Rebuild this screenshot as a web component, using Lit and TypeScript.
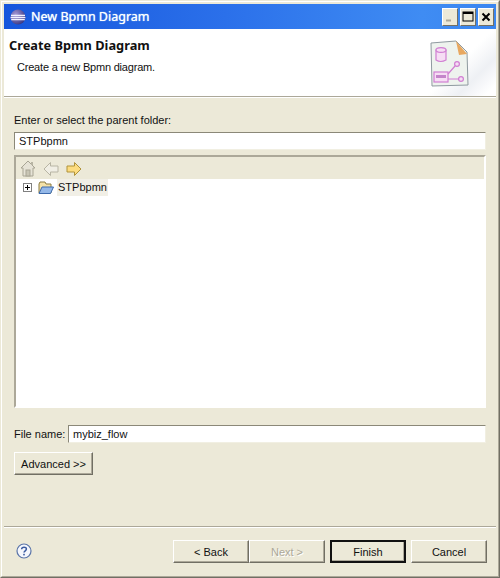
import { LitElement, html, css, svg } from "lit";
import { customElement } from "lit/decorators.js";

@customElement("app-root")
export class AppRoot extends LitElement {
  static styles = css`
    :host {
      display: block;
      width: 500px;
      height: 578px;
      font-family: "Liberation Sans", "Noto Sans", sans-serif;
      font-size: 11px;
      color: #111;
      overflow: hidden;
    }
    * { box-sizing: border-box; }
    .frame {
      width: 500px;
      height: 578px;
      border: 1px solid;
      border-color: #ece9d8 #716f64 #716f64 #ece9d8;
    }
    .window {
      height: 100%;
      background: #ece9d8;
      border: 1px solid;
      border-color: #fff #aca899 #aca899 #fff;
      padding: 2px;
      display: flex;
      flex-direction: column;
    }
    .title {
      height: 25px;
      flex: none;
      display: flex;
      align-items: center;
      padding: 0 2px 0 6px;
      gap: 5px;
      background: linear-gradient(90deg, #1656dc 0%, #2b70ea 45%, #3f8cf3 85%, #3a86f0 100%);
      color: #fff;
      font-family: "Noto Sans", sans-serif;
      font-size: 12.5px;
    }
    .title-text { flex: 1; text-shadow: 0 0 1px #dff; }
    .wbtns { display: flex; gap: 2px; }
    .wbtn {
      width: 16px;
      height: 18px;
      background: #ece9d8;
      border: 1px solid;
      border-color: #fff #716f64 #716f64 #fff;
      display: flex;
      align-items: center;
      justify-content: center;
    }
    .banner {
      height: 67px;
      flex: none;
      background: #fff;
      display: flex;
      overflow: hidden;
    }
    .banner-text { flex: 1; padding: 9px 0 0 5px; }
    .banner-title { font-family: "Noto Sans", sans-serif; font-weight: 700; font-size: 12.8px; line-height: 15px; color: #111; }
    .banner-desc { padding: 7px 0 0 8px; line-height: 14px; letter-spacing: -0.2px; }
    .banner-art { width: 72px; flex: none; padding: 11px 0 0 6px; background: linear-gradient(135deg, #fff 50%, #eef0f4 72%, #fff 92%); }
    .rule { height: 2px; flex: none; border-top: 1px solid #aca899; border-bottom: 1px solid #fff; }
    .main { flex: 1; display: flex; flex-direction: column; padding: 15px 10px 0 10px; }
    .label { line-height: 14px; white-space: nowrap; }
    .input {
      height: 18px;
      background: #fff;
      border: 1px solid;
      border-color: #8b8878 #f1efe2 #f1efe2 #8b8878;
      padding: 0 4px;
      line-height: 17px;
      flex: none;
    }
    .folder-input { margin-top: 5px; }
    .tree {
      margin-top: 5px;
      height: 253px;
      flex: none;
      border: 2px solid;
      border-color: #aca899 #fff #fff #aca899;
      display: flex;
      flex-direction: column;
    }
    .toolbar {
      height: 22px;
      flex: none;
      display: flex;
      align-items: center;
      gap: 7px;
      padding: 1px 0 0 4px;
      background: #ece9d8;
    }
    .tree-body { flex: 1; background: #fff; padding: 0 0 0 7px; }
    .row { display: flex; align-items: center; height: 17px; }
    .plus { width: 9px; height: 9px; border: 1px solid #808080; display: flex; align-items: center; justify-content: center; background: #fff; }
    .folder { margin: 0 3px 0 6px; display: block; }
    .sel { background: #f1efe6; height: 17px; line-height: 17px; padding: 0 1px; }
    .file-row { margin-top: 17px; display: flex; align-items: center; gap: 5px; }
    .file-row .label { width: 49px; flex: none; }
    .file-row .input { flex: 1; }
    .btn {
      height: 23px;
      background: #ece9d8;
      border: 1px solid;
      border-color: #fff #716f64 #716f64 #fff;
      box-shadow: inset -1px -1px 0 #aca899;
      display: flex;
      align-items: center;
      justify-content: center;
      flex: none;
      width: 76px;
    }
    .adv { width: 79px; margin-top: 9px; }
    .footer-rule { margin-top: auto; }
    .footer { height: 46px; flex: none; display: flex; align-items: flex-start; padding: 12px 9px 0 12px; }
    .help { flex: none; margin-top: 3px; display: block; }
    .actions { margin-left: auto; display: flex; }
    .actions .gap { margin-left: 5px; }
    .disabled { color: #aca899; text-shadow: 1px 1px 0 #fff; }
    .default { border: 2px solid #111; box-shadow: inset -1px -1px 0 #aca899; }
  `;

  private eclipse() {
    return html`<svg width="16" height="16" viewBox="0 0 16 16">
      <defs><radialGradient id="ec" cx="0.35" cy="0.35" r="0.8"><stop offset="0" stop-color="#a89bd8"/><stop offset="1" stop-color="#2a2a78"/></radialGradient></defs>
      <circle cx="8" cy="8" r="7.5" fill="url(#ec)"/>
      <path d="M1 6.5h14M0.6 8.6h14.8M1.2 10.6h13.6" stroke="#f0f0ff" stroke-width="1.3"/>
    </svg>`;
  }

  private pageArt() {
    return svg`<svg width="40" height="48" viewBox="0 0 40 48">
      <path d="M1 3 L26 1 L37 12 L38 45 L2 46 Z" fill="#eef3ee" stroke="#8f9aa0"/>
      <path d="M26 1 L37 14 L29 15 Z" fill="#e8a860"/>
      <g fill="#f6ddf4" stroke="#d07fd2" stroke-width="1.2">
        <path d="M6 10 v10 q4.5 3 10 0 v-10 Z"/>
        <ellipse cx="11" cy="10" rx="5" ry="2.4"/>
        <rect x="4" y="32" width="14" height="10"/>
        <circle cx="27" cy="24" r="2.4"/>
        <circle cx="31" cy="39" r="2.4"/>
      </g>
      <path d="M18 34 L25 26 M18 39 L29 39" stroke="#d07fd2" stroke-width="1.2" fill="none"/>
      <path d="M6 35h10v3h-10z" fill="#c484ca"/>
    </svg>`;
  }

  private toolIcon(kind: string) {
    if (kind === "home") {
      return svg`<svg width="16" height="17" viewBox="0 0 16 17"><path d="M8 1 L15 8 H13 V16 H3 V8 H1 Z" fill="#e6e3d6" stroke="#a8a594"/><rect x="6" y="10" width="4" height="6" fill="#c8c5b4" stroke="#a8a594"/><rect x="11" y="2" width="2" height="3" fill="#b8b5a4"/></svg>`;
    }
    if (kind === "back") {
      return svg`<svg width="16" height="14" viewBox="0 0 16 14"><path d="M1 7 L7.5 0.5 V4 H15 V10 H7.5 V13.5 Z" fill="#f0eee4" stroke="#b8b5a4"/></svg>`;
    }
    return svg`<svg width="16" height="14" viewBox="0 0 16 14"><path d="M15 7 L8.5 0.5 V4 H1 V10 H8.5 V13.5 Z" fill="#fcdc80" stroke="#b0933a"/></svg>`;
  }

  render() {
    return html`<div class="frame"><div class="window">
      <div class="title">
        ${this.eclipse()}
        <div class="title-text">New Bpmn Diagram</div>
        <div class="wbtns">
          <div class="wbtn"><svg width="10" height="10" viewBox="0 0 10 10"><path d="M1 8.5h5" stroke="#aca899" stroke-width="2"/></svg></div>
          <div class="wbtn"><svg width="12" height="11" viewBox="0 0 12 11"><rect x="1" y="1" width="10" height="9" fill="none" stroke="#000"/><path d="M1 2h10" stroke="#000" stroke-width="2"/></svg></div>
          <div class="wbtn"><svg width="10" height="10" viewBox="0 0 10 10"><path d="M1.5 1.5l7 7M8.5 1.5l-7 7" stroke="#000" stroke-width="2"/></svg></div>
        </div>
      </div>
      <div class="banner">
        <div class="banner-text">
          <div class="banner-title">Create Bpmn Diagram</div>
          <div class="banner-desc">Create a new Bpmn diagram.</div>
        </div>
        <div class="banner-art">${this.pageArt()}</div>
      </div>
      <div class="rule"></div>
      <div class="main">
        <div class="label">Enter or select the parent folder:</div>
        <div class="input folder-input">STPbpmn</div>
        <div class="tree">
          <div class="toolbar">${this.toolIcon("home")}${this.toolIcon("back")}${this.toolIcon("fwd")}</div>
          <div class="tree-body">
            <div class="row">
              <div class="plus"><svg width="7" height="7" viewBox="0 0 7 7"><path d="M1 3.5h5M3.5 1v5" stroke="#000"/></svg></div>
              <svg class="folder" width="16" height="14" viewBox="0 0 16 14">
                <path d="M1 3 L2 1 H7 L8 3 H13 V12 H1 Z" fill="#f4e2a8" stroke="#8a7a40"/>
                <path d="M1 12.5 L4 6 H15.5 L12.5 12.5 Z" fill="#94b8e8" stroke="#3d6aac"/>
              </svg>
              <span class="sel">STPbpmn</span>
            </div>
          </div>
        </div>
        <div class="file-row">
          <span class="label">File name:</span>
          <div class="input">mybiz_flow</div>
        </div>
        <div class="btn adv">Advanced &gt;&gt;</div>
      </div>
      <div class="rule footer-rule"></div>
      <div class="footer">
        <svg class="help" width="16" height="16" viewBox="0 0 16 16">
          <circle cx="8" cy="8" r="7" fill="#f4f6fc" stroke="#5a74a8" stroke-width="1.2"/>
          <path d="M5.6 6.2 C5.8 3.6 10.4 3.6 10.4 6 C10.4 7.8 8 7.8 8 9.6" fill="none" stroke="#3a5aa0" stroke-width="1.5"/>
          <rect x="7.2" y="10.8" width="1.6" height="1.6" fill="#3a5aa0"/>
        </svg>
        <div class="actions">
          <div class="btn">&lt; Back</div>
          <div class="btn disabled">Next &gt;</div>
          <div class="btn default gap">Finish</div>
          <div class="btn gap">Cancel</div>
        </div>
      </div>
    </div></div>`;
  }
}
